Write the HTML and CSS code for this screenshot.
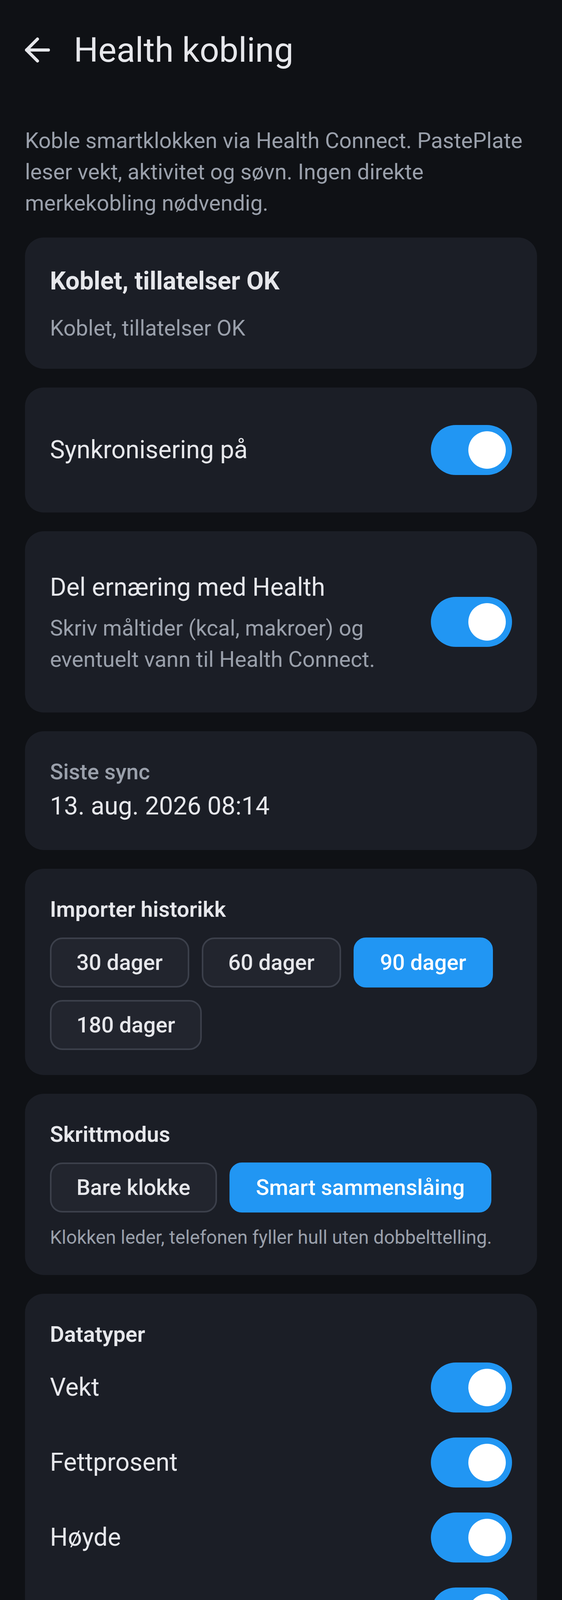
FILE: index.html
```html
<!DOCTYPE html>
<html lang="no">
<head>
<meta charset="utf-8">
<title>Health kobling</title>
<link rel="stylesheet" href="styles.css">
</head>
<body>
<header class="topbar">
  <button class="back" aria-label="Tilbake">
    <svg viewBox="0 0 24 24" fill="none" stroke="currentColor" stroke-width="2" stroke-linecap="round" stroke-linejoin="round"><path d="M19 12H5"/><path d="M12 19l-7-7 7-7"/></svg>
  </button>
  <h1 class="title">Health kobling</h1>
</header>
<main class="content">
  <p class="intro">Koble smartklokken via Health Connect. PastePlate leser vekt, aktivitet og søvn. Ingen direkte merkekobling nødvendig.</p>

  <section class="card">
    <h2 class="status-title">Koblet, tillatelser OK</h2>
    <p class="status-sub">Koblet, tillatelser OK</p>
  </section>

  <section class="card">
    <div class="row">
      <div class="row-text"><div class="row-label">Synkronisering på</div></div>
      <span class="switch"><span class="thumb"></span></span>
    </div>
  </section>

  <section class="card">
    <div class="row">
      <div class="row-text">
        <div class="row-label">Del ernæring med Health</div>
        <div class="row-desc">Skriv måltider (kcal, makroer) og eventuelt vann til Health Connect.</div>
      </div>
      <span class="switch"><span class="thumb"></span></span>
    </div>
  </section>

  <section class="card">
    <div class="meta-label">Siste sync</div>
    <div class="meta-value">13. aug. 2026 08:14</div>
  </section>

  <section class="card">
    <h2 class="section-title">Importer historikk</h2>
    <div class="chips">
      <span class="chip">30 dager</span>
      <span class="chip">60 dager</span>
      <span class="chip selected">90 dager</span>
      <span class="chip">180 dager</span>
    </div>
  </section>

  <section class="card">
    <h2 class="section-title">Skrittmodus</h2>
    <div class="chips">
      <span class="chip">Bare klokke</span>
      <span class="chip selected">Smart sammenslåing</span>
    </div>
    <p class="hint">Klokken leder, telefonen fyller hull uten dobbelttelling.</p>
  </section>

  <section class="card">
    <h2 class="section-title">Datatyper</h2>
    <div class="list">
      <div class="row"><div class="row-text"><div class="row-label">Vekt</div></div><span class="switch"><span class="thumb"></span></span></div>
      <div class="row"><div class="row-text"><div class="row-label">Fettprosent</div></div><span class="switch"><span class="thumb"></span></span></div>
      <div class="row"><div class="row-text"><div class="row-label">Høyde</div></div><span class="switch"><span class="thumb"></span></span></div>
      <div class="row"><div class="row-text"><div class="row-label">Kroppsmål</div></div><span class="switch"><span class="thumb"></span></span></div>
      <div class="row"><div class="row-text"><div class="row-label">Aktiv forbrenning</div></div><span class="switch"><span class="thumb"></span></span></div>
      <div class="row"><div class="row-text"><div class="row-label">Skritt</div></div><span class="switch"><span class="thumb"></span></span></div>
      <div class="row"><div class="row-text"><div class="row-label">Daglig distanse</div></div><span class="switch"><span class="thumb"></span></span></div>
      <div class="row"><div class="row-text"><div class="row-label">Søvn</div></div><span class="switch"><span class="thumb"></span></span></div>
      <div class="row"><div class="row-text"><div class="row-label">Treningsøkter</div></div><span class="switch"><span class="thumb"></span></span></div>
      <div class="row"><div class="row-text"><div class="row-label">Hvilepuls</div></div><span class="switch"><span class="thumb"></span></span></div>
      <div class="row"><div class="row-text"><div class="row-label">Puls</div></div><span class="switch"><span class="thumb"></span></span></div>
      <div class="row"><div class="row-text"><div class="row-label">VO2max</div></div><span class="switch"><span class="thumb"></span></span></div>
      <div class="row"><div class="row-text"><div class="row-label">Oksygenmetning</div></div><span class="switch"><span class="thumb"></span></span></div>
      <div class="row"><div class="row-text"><div class="row-label">Respirasjonsfrekvens</div></div><span class="switch"><span class="thumb"></span></span></div>
      <div class="row"><div class="row-text"><div class="row-label">Pulsvariabilitet</div></div><span class="switch"><span class="thumb"></span></span></div>
      <div class="row"><div class="row-text"><div class="row-label">Blodtrykk</div></div><span class="switch"><span class="thumb"></span></span></div>
    </div>
  </section>

  <button class="primary"><span class="btn-icon"></span><span>Synkroniser nå</span></button>
</main>
</body>
</html>
```

FILE: styles.css
```css
html, body {
  margin: 0;
  padding: 0;
  background: #0f1115;
}

body {
  width: 1440px;
  font-family: Roboto, "Noto Sans", "Liberation Sans", sans-serif;
  color: #e6e7eb;
}

.topbar {
  height: 256px;
  display: flex;
  align-items: center;
  padding-left: 48px;
}

.back {
  width: 96px;
  height: 96px;
  padding: 0;
  margin: 0 45px 0 0;
  border: 0;
  background: none;
  color: #e6e7eb;
  display: flex;
  align-items: center;
  justify-content: center;
}

.back svg {
  width: 96px;
  height: 96px;
  display: block;
}

.title {
  margin: 0;
  font-size: 88px;
  line-height: 112px;
  font-weight: 400;
  color: #e6e7eb;
}

.content {
  padding: 64px 64px 64px;
  display: flex;
  flex-direction: column;
  gap: 48px;
}

.intro {
  margin: 0;
  font-size: 56px;
  line-height: 80px;
  color: #9aa0ab;
}

.card {
  background: #1b1e26;
  border-radius: 48px;
  padding: 64px;
}

.status-title {
  margin: 0;
  font-size: 64px;
  line-height: 96px;
  font-weight: 700;
  color: #e6e7eb;
}

.status-sub {
  margin: 32px 0 0;
  font-size: 56px;
  line-height: 80px;
  color: #9aa0ab;
}

.row {
  display: flex;
  align-items: center;
  gap: 64px;
  padding: 32px 0;
}

.row-text {
  flex: 1;
  min-width: 0;
}

.row-label {
  font-size: 64px;
  line-height: 96px;
  color: #e6e7eb;
}

.row-desc {
  margin-top: 16px;
  font-size: 56px;
  line-height: 80px;
  color: #9aa0ab;
}

.switch {
  flex: none;
  width: 208px;
  height: 128px;
  box-sizing: border-box;
  padding: 0 16px;
  border-radius: 64px;
  background: #2196f3;
  display: flex;
  align-items: center;
  justify-content: flex-end;
}

.thumb {
  width: 96px;
  height: 96px;
  border-radius: 50%;
  background: #ffffff;
}

.meta-label {
  font-size: 56px;
  line-height: 80px;
  font-weight: 500;
  color: #9aa0ab;
}

.meta-value {
  font-size: 64px;
  line-height: 96px;
  color: #e6e7eb;
}

.section-title {
  margin: 0;
  font-size: 56px;
  line-height: 80px;
  font-weight: 600;
  color: #e6e7eb;
}

.chips {
  margin-top: 32px;
  display: flex;
  flex-wrap: wrap;
  gap: 32px;
}

.chip {
  height: 128px;
  box-sizing: border-box;
  padding: 0 64px;
  border: 4px solid #3c404b;
  border-radius: 32px;
  background: #22252e;
  display: flex;
  align-items: center;
  font-size: 56px;
  font-weight: 500;
  color: #e6e7eb;
}

.chip.selected {
  background: #2196f3;
  border-color: #2196f3;
  color: #ffffff;
}

.hint {
  margin: 32px 0 0;
  font-size: 48px;
  line-height: 64px;
  color: #9aa0ab;
}

.primary {
  height: 160px;
  border: 0;
  border-radius: 80px;
  background: #2196f3;
  color: #ffffff;
  display: flex;
  align-items: center;
  justify-content: center;
  gap: 32px;
  font-family: inherit;
  font-size: 56px;
  font-weight: 500;
  padding: 0 64px;
}

.btn-icon {
  width: 72px;
  height: 72px;
  background: #ffffff;
}
```
